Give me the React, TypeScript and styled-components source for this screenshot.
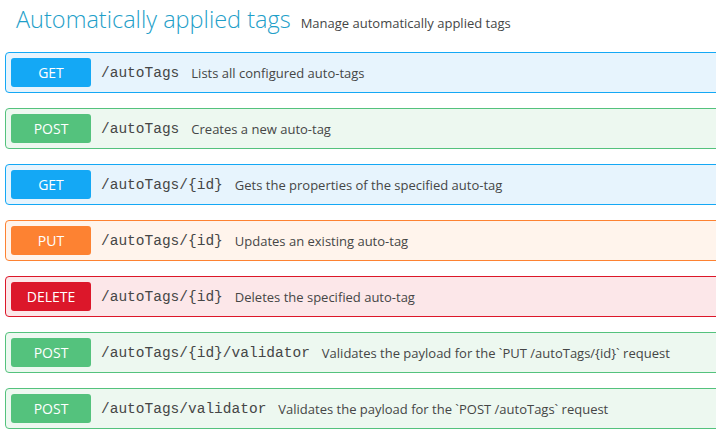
import React from "react";
import styled, { createGlobalStyle } from "styled-components";

const Global = createGlobalStyle`
  html, body { margin: 0; padding: 0; background: #ffffff; overflow: hidden; }
  body { font-family: "Open Sans", "Noto Sans", sans-serif; color: #454646; }
`;

type Method = "GET" | "POST" | "PUT" | "DELETE";

const palette: Record<Method, { main: string; bg: string }> = {
  GET: { main: "#14a8f5", bg: "#e7f4fd" },
  POST: { main: "#54c27d", bg: "#edf8f0" },
  PUT: { main: "#fd8232", bg: "#fff4ec" },
  DELETE: { main: "#dc172a", bg: "#fce7e9" },
};

const Page = styled.div`
  width: 760px;
  padding: 0 0 0 5px;
`;

const Header = styled.header`
  display: flex;
  align-items: baseline;
  gap: 10px;
  padding: 3px 0 0 11px;
  height: 52px;
  box-sizing: border-box;
`;

const Title = styled.h1`
  margin: 0;
  font-family: "Open Sans", sans-serif;
  font-weight: 300;
  font-size: 23.5px;
  line-height: 32px;
  color: #1f9fc9;
`;

const Subtitle = styled.span`
  font-size: 13px;
  color: #454646;
`;

const List = styled.div`
  display: flex;
  flex-direction: column;
  gap: 15px;
`;

const Row = styled.div<{ $method: Method }>`
  display: flex;
  align-items: center;
  padding: 5px;
  border: 1px solid ${(p) => palette[p.$method].main};
  background: ${(p) => palette[p.$method].bg};
  border-radius: 4px;
`;

const Badge = styled.span<{ $method: Method }>`
  flex: none;
  width: 80px;
  height: 29px;
  display: flex;
  align-items: center;
  justify-content: center;
  border-radius: 3px;
  background: ${(p) => palette[p.$method].main};
  color: #ffffff;
  font-size: 14px;
  font-family: "Open Sans", sans-serif;
`;

const Path = styled.span`
  margin-left: 10px;
  font-family: "Liberation Mono", "DejaVu Sans Mono", monospace;
  font-size: 14.5px;
  color: #454646;
`;

const Desc = styled.span`
  margin-left: 12px;
  font-size: 13px;
  color: #454646;
`;

const endpoints: { method: Method; path: string; desc: string }[] = [
  { method: "GET", path: "/autoTags", desc: "Lists all configured auto-tags" },
  { method: "POST", path: "/autoTags", desc: "Creates a new auto-tag" },
  { method: "GET", path: "/autoTags/{id}", desc: "Gets the properties of the specified auto-tag" },
  { method: "PUT", path: "/autoTags/{id}", desc: "Updates an existing auto-tag" },
  { method: "DELETE", path: "/autoTags/{id}", desc: "Deletes the specified auto-tag" },
  {
    method: "POST",
    path: "/autoTags/{id}/validator",
    desc: "Validates the payload for the `PUT /autoTags/{id}` request",
  },
  {
    method: "POST",
    path: "/autoTags/validator",
    desc: "Validates the payload for the `POST /autoTags` request",
  },
];

export default function App() {
  return (
    <Page>
      <Global />
      <Header>
        <Title>Automatically applied tags</Title>
        <Subtitle>Manage automatically applied tags</Subtitle>
      </Header>
      <List>
        {endpoints.map((e, i) => (
          <Row key={i} $method={e.method}>
            <Badge $method={e.method}>{e.method}</Badge>
            <Path>{e.path}</Path>
            <Desc>{e.desc}</Desc>
          </Row>
        ))}
      </List>
    </Page>
  );
}
